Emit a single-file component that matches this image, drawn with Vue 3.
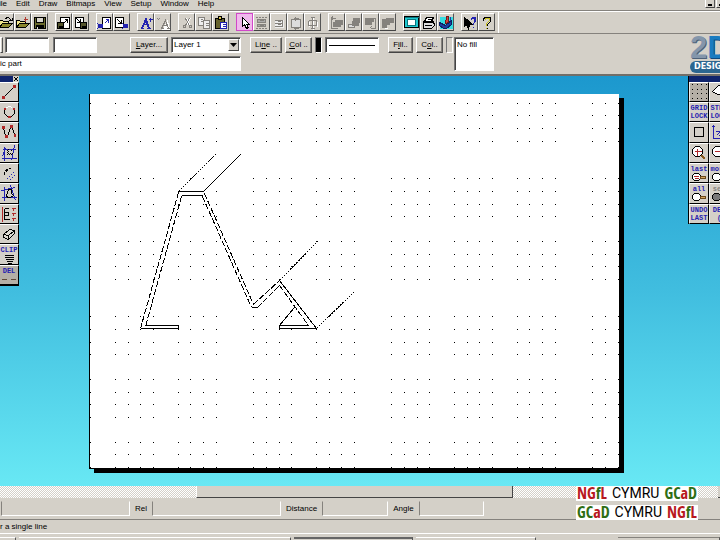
<script setup>
import { ref } from 'vue'

const menus = ['File', 'Edit', 'Draw', 'Bitmaps', 'View', 'Setup', 'Window', 'Help']

// Each icon is a list of [path, fill, stroke] layers on a 16 x 16 grid.
const K = '#000'
const N = 'none'
const B = '#2222b0'
const G = '#85827d'
const floppy = [['M2 2h11v11h-11z', '#6b6b2c', K], ['M4 2h7v5h-7z', '#d8d5cc', K], ['M4 10h7v3h-7z', K, K], ['M5 11v2', N, '#ddd']]
const folder = [['M1 12v-7h3l1 1h5v2', '#f1e58a', K], ['M1 12l3-4h10l-4 4z', '#8a862c', K]]
const toolGroups = [
  { size: 3, items: [
    { name: 'New part', icon: [...folder, ['M7 3c3-2 5 0 5 2M10 5h4v-3', N, K]] },
    { name: 'Open', icon: [...folder, ['M10 1v5M8 4h4', N, '#b03a30']] },
    { name: 'Save', icon: floppy }
  ] },
  { size: 2, items: [
    { name: 'Load drawing', icon: [['M4 2h9v11h-9z', '#fff', K], ['M1 7h6v6h-6z', '#55552c', K], ['M3 11h3v2h-3z', K, K], ['M7 8l4-4M8 4h3v3', N, K]] },
    { name: 'Store drawing', icon: [['M2 2h8v10h-8z', '#fff', K], ['M7 7h6v6h-6z', '#55552c', K], ['M9 11h3v2h-3z', K, K], ['M3 3l4 4M7 3v4h-4', N, K]] }
  ] },
  { size: 2, items: [
    { name: 'Get symbol', icon: [['M5 2h8v11h-8z', '#fff', K], ['M0 8l6 5M0 13l6-5M1 9h4v3h-4z', N, B], ['M7 8l4-4M8 4h3v3', N, B]] },
    { name: 'Put symbol', icon: [['M1 2h8v10h-8z', '#fff', K], ['M8 8l6 5M8 13l6-5M9 9h4v3h-4z', N, B], ['M3 4l4 4M7 4v4h-4', N, K]] }
  ] },
  { size: 2, items: [
    { name: 'Text', icon: [['M2 13h3M3 13l4-9l3 9M4 13l4-9l3 9M5 9h4M8 13h4', N, B], ['M12 2v4M10 4h4', N, B]] },
    { name: 'Edit text', icon: [['M6 14h3M8 14l4-8l2 8M9 11h4', '#fff', '#fff'], ['M5 13h3M6 13l4-8l3 8M8 10h4M11 13h3M2 3l2 2M4 3l-2 2', N, G]] }
  ] },
  { size: 3, items: [
    { name: 'Cut', icon: [['M7 3l4 7M11 3l-4 7', N, '#fff'], ['M6 3l4 7M10 3l-4 7', N, G], ['M4 10h2v2h-2zM10 10h2v2h-2z', N, G]] },
    { name: 'Copy', icon: [['M2 2h6v8h-6z', '#eee', G], ['M7 5h6v8h-6z', '#eee', G], ['M4 4h2M4 6h2M9 8h3M9 10h3', N, G]] },
    { name: 'Paste', icon: [['M2 3h9v10h-9z', '#66622c', K], ['M5 1h3v3h-3z', '#d8c84a', K], ['M7 7h6v6h-6z', '#fff', B], ['M9 9h3M9 11h3', N, B]] }
  ] },
  { size: 5, items: [
    { name: 'Select', active: true, icon: [['M5 2v9l2-2l2 4l2-1l-2-3h3z', '#fff', K]] },
    { name: 'Select group', icon: [['M1 2h12M1 13h12', N, G, '2 1'], ['M3 4h8v3h-8zM3 9h8v2h-8z', '#aaa', G], ['M5 5h4M5 10h4', N, G]] },
    { name: 'Align', icon: [['M3 4h9v8h-9z', '#eee', N], ['M3 5h8M3 8h8M3 11h8M11 5v6M6 6h3M6 9h3', N, G]] },
    { name: 'Resize', icon: [['M3 4h9v8h-9z', '#ddd', G], ['M7 1v4M7 11v3M5 3h5M5 13h5', N, G]] },
    { name: 'Centre', icon: [['M8 2v12M4 6v5M12 6v5', N, '#fff'], ['M7 1v12M5 2h4M5 13h4M3 5h8M3 5v5M11 5v5M3 10h8', N, G]] }
  ] },
  { size: 4, items: [
    { name: 'Bring to front', icon: [['M6 5h7v4h-2v2h-7v-4h2z', G, G], ['M2 3v10h6M2 3h4M3 1l-1 2l2 2', N, G]] },
    { name: 'Bring forward', icon: [['M7 3h6v4h-6z', G, G], ['M2 9h6v3h-6z', '#ddd', G], ['M6 6h6v4h-6z', G, G]] },
    { name: 'Send back', icon: [['M2 3h8v3h-2v3h-6z', G, G], ['M12 3v10h-5M8 11l-2 2M7 3h5', N, G]] },
    { name: 'Send to back', icon: [['M2 4h7v5h-3v3h-4z', G, G], ['M6 3h7v4h-7z', G, G], ['M4 13h3', N, '#fff']] }
  ] },
  { size: 3, items: [
    { name: 'Full screen', icon: [['M0 1h14v11h-14z', '#20c8d0', K], ['M3 4h8v6h-8z', '#fff', '#087880'], ['M0 2h14', N, '#087880']] },
    { name: 'Print', icon: [['M5 2h7l-2 4h-7z', '#fff', K], ['M2 6h10l1 4l-3 3h-8z', '#ddd', K], ['M2 7h10M3 10h7M2 13h8M6 4h4', N, K]] },
    { name: 'Plot', icon: [['M1 1h13v12h-13z', '#35dce0', N], ['M1 7l6 3l6-5v4l-5 4h-3l-4-3z', '#1e3aa0', '#0a2060'], ['M8 1h2v6l-3 1z', '#d04040', '#701818'], ['M2 6l5 3', N, '#35dce0'], ['M12 1v4', N, '#1e3aa0']] }
  ] },
  { size: 2, items: [
    { name: 'Context help', icon: [['M2 2v9l2-2l2 4l1-4h3z', K, K], ['M9 4v-1h1v-1h3v4l-2 2v1M11 11v1M10 3h2v3', N, B]] },
    { name: 'Help', icon: [['M4 5v-2h1v-1h6v4l-3 3v1M8 12v1', N, K], ['M6 4v-1h4v2l-3 3v2M7 12v1', N, '#c8c020'], ['M5 3l1-1h3', N, K]] }
  ] }
]

const R = '#b02828'
const leftTools = [
  { name: 'Line', icon: [['M2 13L13 2', N, K], ['M1 12h2v2h-2zM12 1h2v2h-2z', R, R]] },
  { name: 'Circle', icon: [['M4 4c-2 3-1 8 4 8s6-5 4-8', N, K], ['M5 3c2-1 4-1 6 0', N, '#fff'], ['M3 4h1v1h-1zM12 4h1v1h-1zM7 12h2v1h-2z', R, R]] },
  { name: 'Curve', icon: [['M2 4c1 1 1 8 3 8s3-9 5-9s2 7 4 8', N, K], ['M1 2h2v2h-2zM4 11h2v2h-2zM9 1h2v2h-2zM13 10h1v2h-1z', R, R]] },
  { name: 'Hatch', icon: [['M3 1v14M1 4h13M13 0l-3 15M0 13h15M1 11l3-8', N, B], ['M4 11l6-6M6 11l5-5M8 11l3-3', N, K, '1 1'], ['M4 7l3-3M4 9l5-5', N, K, '1 1']] },
  { name: 'Offset', icon: [['M3 9c0-3 2-6 6-6M5 3v3M3 5h3', N, K, '3 1'], ['M5 14L13 6M8 15l6-6', N, B, '2 1']] },
  { name: 'Outline', icon: [['M3 1v14M0 12h15M9 0l5 15M0 5l14-3', N, B], ['M5 10l2-6h3v4l2 2l-3 2h-3z', '#d4d0c8', K]] },
  { name: 'Dimension', icon: [['M1 0v15', N, R], ['M3 2h4M3 2v11M3 6h4v3h-4M3 13h5', N, K], ['M10 2h4M10 7h4M10 12h4M12 1v3M12 6v3M12 11v3', N, R]] },
  { name: 'Box', icon: [['M2 8l6-5l5 1v3l-6 6l-5-2z', '#dedbd3', K], ['M2 8l5 1l6-5M7 9v4', N, K]] },
  { name: 'CLIP', label: ['CLIP'], icon: [['M3 1h9M3 3h9M4 5h8M5 7h6M6 9h4', N, K]] },
  { name: 'DEL', label: ['DEL'], pressed: true, icon: [['M0 4h5M9 4h5', N, '#604838']] }
]
const lens = sign => [['M4 1h4l3 3v4l-3 3h-4l-3-3v-4z', '#fff', K], [sign, N, R], ['M10 10l4 4M10 11l3 3M11 10l3 3', N, '#8a5a20']]
const smallLens = fill => [['M3 0h4l2 2v3l-2 2h-4l-2-2v-3z', fill, K], ['M9 3h5v2h-5z', '#d8a860', '#6a481c']]
const gridDots = [0, 5, 9, 14].map(y => [0, 5, 9, 14].map(x => `M${x} ${y}h1`).join('')).join('')
const rightTools = [
  { name: 'Grid', pressed: true, icon: [[gridDots, N, K]] },
  { name: 'Pan', icon: [['M1 7l6-6h8v12h-5v-3h-4z', '#fff', K]] },
  { name: 'Grid lock', label: ['GRID', 'LOCK'], icon: [] },
  { name: 'Step lock', label: ['STEP', 'LOCK'], icon: [] },
  { name: 'Square', icon: [['M3 3h9v9h-9z', N, K]] },
  { name: 'Angle', icon: [['M2 14V1M0 3l2-2l2 2M2 14h13M4 7h8v7', N, B], ['M5 11l3-3M7 12l4-4', N, B]] },
  { name: 'Zoom in', icon: lens('M3 6h7M6 3v7') },
  { name: 'Zoom out', icon: lens('M3 6h7') },
  { name: 'Zoom last', label: ['last'], icon: [...smallLens('#fff'), ['M2 3h5M3 5h4', N, R]] },
  { name: 'Zoom more', label: ['more'], icon: smallLens('#fff') },
  { name: 'Zoom all', label: ['all'], icon: smallLens('#fff') },
  { name: 'Zoom sel', label: ['sel'], muted: true, icon: smallLens('#777') },
  { name: 'Undo last', label: ['UNDO', 'LAST'], icon: [] },
  { name: 'Delete', label: ['DEL', '('], icon: [] }
]

const gridX = [90, 115, 128, 140, 153, 178, 190, 203, 216, 253, 266, 279, 291, 316, 329, 341, 354, 391, 404, 417, 429, 454, 467, 479, 492, 517, 529, 542, 555, 592, 605, 618]
const gridY = [103, 115, 128, 141, 178, 191, 204, 216, 241, 254, 266, 279, 316, 329, 342, 354, 379, 392, 404, 417, 442, 454, 467]
const dots = gridY.flatMap(y => gridX.map(x => `M${x} ${y}h1v1h-1z`)).join('')

const fields = [
  { id: 'rel', label: 'Rel' },
  { id: 'distance', label: 'Distance' },
  { id: 'angle', label: 'Angle' }
]
const layer = ref('Layer 1')
const part = ref('ic part')
</script>

<template>
  <div class="app">
    <header class="menubar">
      <nav class="menus">
        <a v-for="m in menus" :key="m" href="#">{{ m }}</a>
      </nav>
      <div class="window-buttons">
        <button class="raised" aria-label="Minimise"><i class="dash"></i></button>
        <button class="raised" aria-label="Restore"><i class="dash"></i></button>
      </div>
    </header>

    <div class="toolbar">
      <div v-for="(g, gi) in toolGroups" :key="gi" class="group">
        <button v-for="t in g.items" :key="t.name" class="tool raised" :class="{ active: t.active }" :aria-label="t.name">
          <svg viewBox="-0.5 -0.5 16 16" class="glyph">
            <path v-for="(p, i) in t.icon" :key="i" :d="p[0]" :fill="p[1]" :stroke="p[2]" :stroke-dasharray="p[3]" />
          </svg>
        </button>
      </div>
      <span class="toolbar-end"></span>
    </div>

    <div class="options">
      <div class="options-left">
        <div class="row">
          <span class="stub raised"></span>
          <input class="box coord" aria-label="X" />
          <input class="box coord" aria-label="Y" />
          <button class="text-button raised layer-button"><u>L</u>ayer...</button>
          <div class="box combo">
            <select v-model="layer" aria-label="Layer">
              <option>Layer 1</option>
            </select>
            <span class="arrow raised"><svg viewBox="0 0 7 4"><path d="M0 0h7L3.5 4z" /></svg></span>
          </div>
        </div>
        <input v-model="part" class="box part" aria-label="Part" />
      </div>
      <div class="options-right">
        <button class="text-button raised wide">Li<u>n</u>e ..</button>
        <button class="text-button raised mid"><u>C</u>ol ..</button>
        <span class="swatch black"></span>
        <span class="box line-sample"><i></i></span>
        <button class="text-button raised fill">F<u>i</u>ll..</button>
        <button class="text-button raised mid">C<u>o</u>l..</button>
        <span class="swatch"></span>
        <span class="box fill-sample">No fill</span>
      </div>
      <div class="brand">
        <div class="brand-mark"><span>2</span><b>D</b></div>
        <div class="brand-pill">DESIGN</div>
      </div>
    </div>

    <main class="workspace">
      <aside class="palette left">
        <div class="palette-title">
          <button aria-label="Close"><svg viewBox="0 0 6 6"><path d="M1 1l4 4M5 1l-4 4" stroke="#000" /></svg></button>
        </div>
        <div class="cells">
          <button v-for="t in leftTools" :key="t.name" class="cell" :class="{ pressed: t.pressed }" :aria-label="t.name">
            <span v-for="l in t.label" :key="l" class="caption">{{ l }}</span>
            <svg class="glyph" :class="{ short: t.label }" :viewBox="t.label ? '-0.5 -0.5 16 10' : '-0.5 -0.5 16 16'">
              <path v-for="(p, i) in t.icon" :key="i" :d="p[0]" :fill="p[1]" :stroke="p[2]" :stroke-dasharray="p[3]" />
            </svg>
          </button>
        </div>
      </aside>

      <div class="sheet-area">
        <svg class="sheet" viewBox="89 94 535 380" role="img" aria-label="Drawing sheet">
          <path class="ink" d="M94 98h530v375h-530z" />
          <path class="ink" d="M89 94h530v375h-530z" />
          <path class="paper" d="M90 94h529v374h-529z" />
          <path class="ink" :d="dots" />
          <g class="lines">
            <path d="M203.500 191.500L240.500 154.500" />
            <path d="M178.500 191.500H203.500M181.500 195.500H202.500" />
            <path class="dash" d="M178.500 192.500L140.500 328.500M181.500 196.500L145.500 326.500" />
            <path class="dash" d="M204.500 193.500L253.500 304.500M202.500 196.500L251.500 307.500" />
            <path d="M145.500 325.500H178.500V328.500H140.500" />
            <path d="M251.500 307.500H257.500" />
            <path class="dash" d="M253.500 304.500L279.500 280.500M257.500 307.500L279.500 285.500" />
            <path d="M279.500 280.500L316.500 328.500H279.500V325.500H308.500" />
            <path class="dash" d="M279.500 285.500L308.500 325.500" />
            <path d="M279.500 325.500L294.500 307.500" />
            <path class="dot" d="M178.500 191.500L216.500 153.500M279.500 280.500L317.500 241.500M316.500 328.500L354.500 291.500" />
          </g>
        </svg>
      </div>

      <aside class="palette right">
        <div class="palette-title"></div>
        <div class="cells">
          <button v-for="t in rightTools" :key="t.name" class="cell" :class="{ pressed: t.pressed, muted: t.muted }" :aria-label="t.name">
            <span v-for="l in t.label" :key="l" class="caption">{{ l }}</span>
            <svg v-if="t.icon.length" class="glyph" :class="{ short: t.label }" :viewBox="t.label ? '-0.5 -0.5 16 10' : '-0.5 -0.5 16 16'">
              <path v-for="(p, i) in t.icon" :key="i" :d="p[0]" :fill="p[1]" :stroke="p[2]" />
            </svg>
          </button>
        </div>
      </aside>
    </main>

    <footer class="footer">
      <div class="scrollbar"><span class="thumb"></span><span class="scroll-end"></span></div>
      <div class="status">
        <span class="sunken first"></span>
        <template v-for="f in fields" :key="f.id">
          <label :for="f.id">{{ f.label }}</label>
          <input :id="f.id" class="sunken" :class="f.id" />
        </template>
      </div>
      <div class="hint">r a single line</div>
      <div class="taskbar"><span class="t1"></span><span class="t2"></span><span class="t3"></span><span class="t4"></span><span class="t5"></span></div>
      <div class="badge">
        <p><b class="red">NG</b><b class="green">f</b><b class="red">L</b> <span>CYMRU</span> <b class="green">GC</b><b class="red">a</b><b class="green">D</b></p>
        <p><b class="green">GC</b><b class="red">a</b><b class="green">D</b> <span>CYMRU</span> <b class="red">NG</b><b class="green">f</b><b class="red">L</b></p>
      </div>
    </footer>
  </div>
</template>

<style>
body {
  background: #d4d0c8;
}
</style>

<style scoped>
* {
  box-sizing: border-box;
}
.app {
  display: flex;
  flex-direction: column;
  min-height: 100vh;
  overflow: hidden;
  background: #d4d0c8;
  color: #000;
  font: 8px/10px "Liberation Sans", Arial, sans-serif;
}
button, input, select {
  margin: 0;
  padding: 0;
  border: 0;
  border-radius: 0;
  background: #d4d0c8;
  color: inherit;
  font: inherit;
  min-width: 0;
}
.raised {
  border: 1px solid;
  border-color: #fff #555 #444 #fff;
}
.box {
  border: 1px solid;
  border-color: #777 #fff #fff #777;
  background: #fff;
  box-shadow: inset 1px 1px #444;
}
.glyph {
  display: block;
  flex: none;
  width: 16px;
  height: 16px;
  shape-rendering: crispEdges;
}
.menubar {
  display: flex;
  justify-content: space-between;
  height: 11px;
  border-bottom: 1px solid #85827d;
}
.menus {
  display: flex;
  gap: 9px;
  margin-left: -6px;
  line-height: 7px;
}
.menus a {
  color: #000;
  text-decoration: none;
}
.window-buttons {
  display: flex;
  gap: 1px;
  height: 8px;
  margin-right: -6px;
}
.window-buttons button {
  display: flex;
  align-items: flex-end;
  width: 10px;
  padding: 1px 2px;
  border-top: 0;
}
.window-buttons .dash {
  width: 5px;
  height: 2px;
  background: #000;
}
.toolbar {
  display: flex;
  gap: 7px;
  height: 23px;
  padding: 1px 0 2px;
  margin-left: -3px;
  border-top: 1px solid #fff;
  border-bottom: 1px solid #85827d;
}
.group {
  display: flex;
  flex: none;
}
.tool {
  display: flex;
  flex: none;
  align-items: flex-start;
  width: 17px;
  padding-top: 1px;
  overflow: hidden;
}
.tool.active {
  border: 1px solid #d048c8;
  background: #f0b8ec;
}
.toolbar-end {
  width: 1px;
  margin-top: -1px;
  margin-left: -4px;
  margin-bottom: -2px;
  background: #fff;
}
.options {
  display: flex;
  justify-content: space-between;
  height: 42px;
  padding-top: 3px;
  border-bottom: 2px solid #716e69;
}
.options-left {
  display: flex;
  flex: none;
  flex-direction: column;
  gap: 3px;
  width: 241px;
}
.row {
  display: flex;
  gap: 4px;
}
.row > * {
  height: 16px;
}
.stub {
  width: 3px;
}
.coord {
  width: 44px;
}
.coord:nth-child(2) {
  margin-left: -2px;
}
.text-button {
  flex: none;
  height: 16px;
  text-align: center;
  box-shadow: inset -1px -1px #85827d;
}
.layer-button {
  width: 38px;
  margin-left: 29px;
}
.combo {
  display: flex;
  flex: 1;
  margin-left: -1px;
  padding: 1px;
}
.combo select {
  flex: 1;
  width: 100%;
  padding-left: 1px;
  background: #fff;
  appearance: none;
}
.arrow {
  display: flex;
  flex: none;
  align-items: center;
  justify-content: center;
  width: 11px;
  background: #d4d0c8;
}
.arrow svg {
  width: 7px;
  height: 4px;
}
.part {
  height: 15px;
  width: 100%;
  border-left: 0;
  box-shadow: inset 0 1px #444;
}
.options-right {
  display: flex;
  flex: 1;
  align-items: flex-start;
  gap: 3px;
  padding-left: 9px;
}
.wide { width: 32px; }
.mid { width: 27px; }
.fill { width: 25px; margin-left: 6px; }
.swatch {
  width: 7px;
  height: 16px;
  border: 1px solid;
  border-color: #777 #fff #fff #777;
}
.swatch.black {
  background: #000;
}
.line-sample {
  display: flex;
  align-items: center;
  width: 54px;
  height: 16px;
  padding: 0 3px;
}
.line-sample i {
  flex: 1;
  height: 1px;
  background: #000;
}
.fill-sample {
  width: 40px;
  height: 34px;
  margin-left: -2px;
  padding: 2px;
}
.brand {
  flex: none;
  width: 30px;
}
.brand-mark {
  display: flex;
  height: 23px;
  font-size: 31px;
  font-weight: bold;
  line-height: 22px;
  color: #8496ab;
  text-shadow: 1px 1px #4d6179;
}
.brand-mark b {
  color: #1a7cc0;
  text-shadow: 1px 1px #0b4a80;
}
.brand-pill {
  width: 42px;
  height: 12px;
  margin-top: 1px;
  padding-left: 4px;
  border-radius: 6px;
  background: #2c6690;
  color: #fff;
  font: bold 8px/12px "DejaVu Sans", sans-serif;
}
.workspace {
  display: grid;
  flex: 1;
  grid-template-columns: 20px 1fr 32px;
  align-items: start;
  background: linear-gradient(#1c98ce, #40bddf 52%, #68e8f4);
}
.sheet-area {
  padding: 18px 64px 12px 69px;
}
.sheet {
  display: block;
  width: 100%;
  shape-rendering: crispEdges;
}
.ink { fill: #000; }
.paper { fill: #fff; }
.lines {
  fill: none;
  stroke: #000;
}
.lines .dash { stroke-dasharray: 6 2; }
.lines .dot { stroke-dasharray: 2 1; }
.palette {
  overflow: hidden;
}
.palette.left {
  width: 19px;
}
.palette-title {
  display: flex;
  justify-content: flex-end;
  height: 6px;
  background: #10246c;
}
.palette-title button {
  width: 6px;
  height: 6px;
}
.palette-title svg {
  display: block;
}
.cells {
  display: grid;
  grid-auto-rows: 20px 20px 21px;
  background: #000;
}
.left .cells {
  padding-bottom: 1px;
}
.right {
  border-left: 1px solid #000;
}
.right .cells {
  grid-template-columns: 20px 20px;
}
.cell {
  display: flex;
  flex-direction: column;
  align-items: center;
  padding-top: 1px;
  overflow: hidden;
  border: 1px solid;
  border-color: #fff #000 #000 #eee;
  color: #2420b0;
  font: bold 7px/8px "Liberation Mono", monospace;
}
.left .cell {
  border-left: 0;
}
.cell.pressed {
  background: #b5afa6;
}
.cell.muted {
  color: #85827d;
}
.cell .glyph.short {
  height: 10px;
}
.caption {
  display: block;
}
.footer {
  position: relative;
}
.scrollbar {
  display: flex;
  justify-content: space-between;
  height: 12px;
  background: repeating-conic-gradient(#d4d0c8 0 25%, #fff 0 50%) 0 0 / 2px 2px;
}
.thumb {
  width: 44%;
  margin-left: 196px;
  border-right: 1px solid #444;
  border-bottom: 1px solid #444;
  border-left: 1px solid #fff;
  background: #d4d0c8;
}
.scroll-end {
  width: 2px;
  border-bottom: 1px solid #444;
  background: #d4d0c8;
}
.status {
  display: flex;
  align-items: center;
  height: 22px;
  gap: 5px;
  padding-left: 1px;
  border-bottom: 1px solid #85827d;
}
.sunken {
  height: 15px;
  border: 1px solid;
  border-color: #d4d0c8 #fff #fff #85827d;
}
.sunken.first { width: 129px; }
.rel { width: 129px; }
.distance { width: 66px; }
.angle { width: 65px; }
.hint {
  height: 14px;
  border-bottom: 1px solid #fff;
  line-height: 13px;
}
.taskbar {
  display: flex;
  gap: 3px;
  height: 6px;
  padding-top: 3px;
}
.taskbar span {
  border-top: 1px solid #fff;
  border-right: 1px solid #555;
}
.taskbar .t1 { width: 16px; }
.taskbar .t2 { width: 272px; }
.taskbar .t3 { width: 119px; border-top: 2px solid #666; }
.taskbar .t4 { width: 120px; }
.taskbar .t5 { flex: 1; margin-left: 79px; border-top-color: #85827d; }
.badge {
  position: absolute;
  top: 0;
  right: 22px;
  display: flex;
  flex-direction: column;
  gap: 4px;
  width: 122px;
  font: bold 16px/15px "Open Sans Condensed", "Liberation Sans Narrow", "Liberation Sans", sans-serif;
  white-space: nowrap;
}
.badge p {
  display: flex;
  justify-content: center;
  height: 15px;
  margin: 0;
  background: #fff;
}
.badge span {
  margin: 0 5px;
  font: 14px/15px Roboto, "Liberation Sans", sans-serif;
}
.red { color: #b81820; }
.green { color: #2f6e14; }
</style>
